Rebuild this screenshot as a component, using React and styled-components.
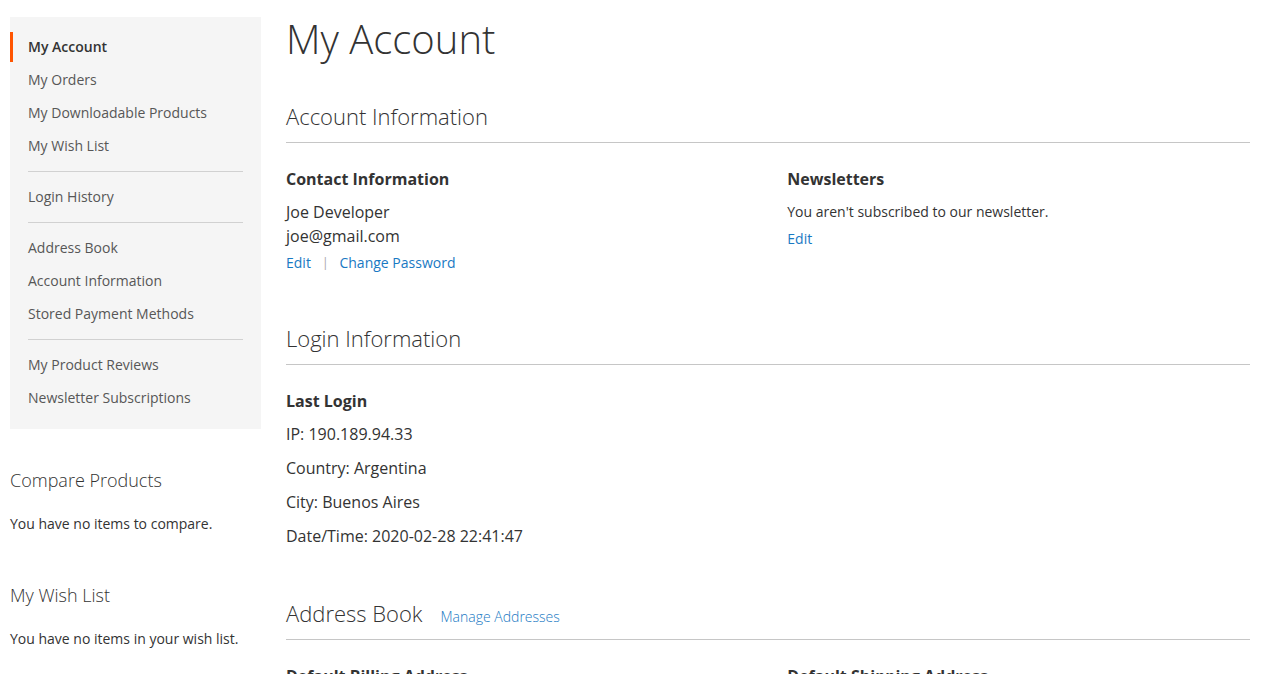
import React from 'react'
import styled, { createGlobalStyle } from 'styled-components'

const GlobalStyle = createGlobalStyle`
  html, body {
    margin: 0;
    padding: 0;
    background: #fff;
  }
  body {
    font-family: "Open Sans", "Liberation Sans", sans-serif;
    color: #333;
    font-size: 14px;
  }
  * { box-sizing: border-box; }
`

const navGroups = [
    [
        { label: 'My Account', active: true },
        { label: 'My Orders' },
        { label: 'My Downloadable Products' },
        { label: 'My Wish List' },
    ],
    [{ label: 'Login History' }],
    [
        { label: 'Address Book' },
        { label: 'Account Information' },
        { label: 'Stored Payment Methods' },
    ],
    [
        { label: 'My Product Reviews' },
        { label: 'Newsletter Subscriptions' },
    ],
]

function AccountNav() {
    return (
        <Nav>
            {navGroups.map((group, i) => (
                <React.Fragment key={i}>
                    {i > 0 && <NavDivider />}
                    {group.map(item => (
                        <NavItem key={item.label} $active={item.active}>
                            {item.label}
                        </NavItem>
                    ))}
                </React.Fragment>
            ))}
        </Nav>
    )
}

function App() {
    return (
        <>
            <GlobalStyle />
            <Page>
                <Sidebar>
                    <AccountNav />
                    <SideBlock $first>
                        <SideTitle>Compare Products</SideTitle>
                        <SideText>You have no items to compare.</SideText>
                    </SideBlock>
                    <SideBlock>
                        <SideTitle>My Wish List</SideTitle>
                        <SideText>You have no items in your wish list.</SideText>
                    </SideBlock>
                </Sidebar>

                <Main>
                    <PageTitle>My Account</PageTitle>

                    <Section>
                        <SectionTitle>Account Information</SectionTitle>
                        <Boxes>
                            <Box>
                                <BoxTitle>Contact Information</BoxTitle>
                                <BoxContent>
                                    Joe Developer
                                    <br />
                                    joe@gmail.com
                                </BoxContent>
                                <Actions>
                                    <Link href="#">Edit</Link>
                                    <Sep>|</Sep>
                                    <Link href="#">Change Password</Link>
                                </Actions>
                            </Box>
                            <Box>
                                <BoxTitle>Newsletters</BoxTitle>
                                <SmallContent>You aren't subscribed to our newsletter.</SmallContent>
                                <Actions>
                                    <Link href="#">Edit</Link>
                                </Actions>
                            </Box>
                        </Boxes>
                    </Section>

                    <Section>
                        <SectionTitle>Login Information</SectionTitle>
                        <Box>
                            <BoxTitle>Last Login</BoxTitle>
                            <InfoLine>IP: 190.189.94.33</InfoLine>
                            <InfoLine>Country: Argentina</InfoLine>
                            <InfoLine>City: Buenos Aires</InfoLine>
                            <InfoLine>Date/Time: 2020-02-28 22:41:47</InfoLine>
                        </Box>
                    </Section>

                    <Section>
                        <SectionTitle>
                            Address Book
                            <TitleLink href="#">Manage Addresses</TitleLink>
                        </SectionTitle>
                        <Boxes>
                            <Box>
                                <BoxTitle>Default Billing Address</BoxTitle>
                            </Box>
                            <Box>
                                <BoxTitle>Default Shipping Address</BoxTitle>
                            </Box>
                        </Boxes>
                    </Section>
                </Main>
            </Page>
        </>
    )
}

export default App

const Page = styled.div`
    display: flex;
    gap: 25px;
    padding: 17px 17px 0 10px;
    height: 674px;
    overflow: hidden;
`
const Sidebar = styled.aside`
    width: 251px;
    flex-shrink: 0;
`
const Nav = styled.nav`
    background: #f5f5f5;
    padding: 15px 0 13px;
`
const NavItem = styled.div`
    height: 30px;
    line-height: 30px;
    margin-bottom: 3px;
    padding-left: 15px;
    border-left: 3px solid ${p => (p.$active ? '#ff5501' : 'transparent')};
    font-size: 14px;
    font-weight: ${p => (p.$active ? 600 : 400)};
    color: ${p => (p.$active ? '#333' : '#575757')};
`
const NavDivider = styled.div`
    height: 1px;
    background: #d1d1d1;
    margin: 10px 18px;
`
const SideBlock = styled.div`
    margin-top: ${p => (p.$first ? '39px' : '49px')};
`
const SideTitle = styled.div`
    font-size: 18px;
    font-weight: 300;
    line-height: 24px;
    color: #333;
`
const SideText = styled.p`
    margin: 22px 0 0;
    font-size: 14px;
    line-height: 20px;
`
const Main = styled.main`
    flex: 1;
    min-width: 0;
`
const PageTitle = styled.h1`
    margin: 0 0 41px;
    font-size: 40px;
    font-weight: 300;
    line-height: 44px;
`
const Section = styled.section`
    margin-bottom: 51px;
`
const SectionTitle = styled.h2`
    margin: 0 0 25px;
    padding-bottom: 12px;
    border-bottom: 1px solid #c6c6c6;
    font-size: 22px;
    font-weight: 300;
    line-height: 28px;
`
const TitleLink = styled.a`
    margin-left: 18px;
    font-size: 14px;
    line-height: 14px;
    color: #1979c3;
    text-decoration: none;
`
const Boxes = styled.div`
    display: flex;
    justify-content: space-between;
`
const Box = styled.div`
    width: 48%;
`
const BoxTitle = styled.div`
    font-size: 16px;
    font-weight: 700;
    line-height: 22px;
`
const BoxContent = styled.div`
    margin-top: 10px;
    font-size: 16px;
    line-height: 24px;
`
const SmallContent = styled.p`
    margin: 10px 0 0;
    font-size: 14px;
    line-height: 24px;
`
const Actions = styled.div`
    display: flex;
    align-items: center;
    margin-top: 5px;
    font-size: 14px;
    line-height: 20px;
`
const Link = styled.a`
    color: #1979c3;
    text-decoration: none;
`
const Sep = styled.span`
    margin: 0 11px;
    color: #a6a6a6;
    font-size: 12px;
`
const InfoLine = styled.p`
    margin: 10px 0 0;
    font-size: 16px;
    line-height: 24px;
`
